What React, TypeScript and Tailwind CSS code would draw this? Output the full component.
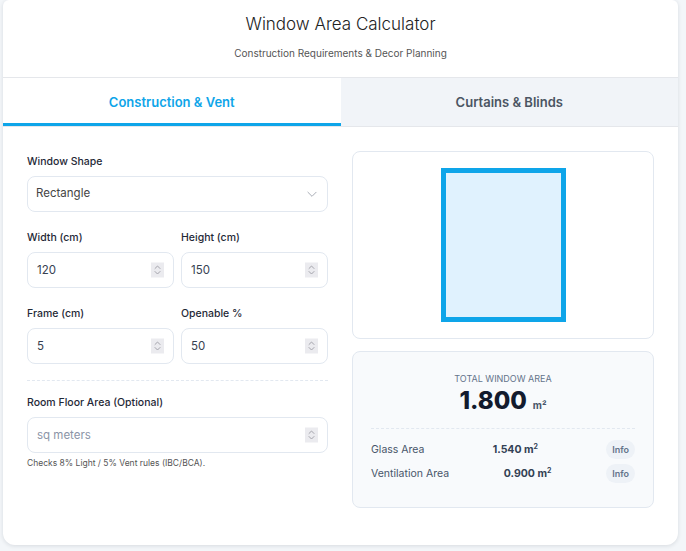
import React from "react";

const font = { fontFamily: "Inter, 'Noto Sans', sans-serif" };

function Spinner() {
  return (
    <div className="absolute right-[10px] top-1/2 -translate-y-1/2 w-[13px] h-[15px] bg-[#ebebef] flex items-center justify-center pointer-events-none">
      <svg width="7" height="11" viewBox="0 0 7 11" fill="none" stroke="#a3a3ab" strokeWidth="1" strokeLinecap="round" strokeLinejoin="round">
        <path d="M1 4 L3.5 1.5 L6 4" />
        <path d="M1 7 L3.5 9.5 L6 7" />
      </svg>
    </div>
  );
}

function NumInput({ value, placeholder }: { value?: string; placeholder?: string }) {
  return (
    <div className="relative">
      <input
        type="text"
        defaultValue={value}
        placeholder={placeholder}
        className="w-full h-[36px] rounded-lg border border-[#e2e8f0] bg-white pl-[9px] pr-[30px] text-[11.5px] text-[#374151] placeholder:text-[#8b95a7] outline-none"
        style={font}
      />
      <Spinner />
    </div>
  );
}

function Label({ children }: { children: React.ReactNode }) {
  return <div className="text-[10.5px] font-medium text-[#1f2937] mb-[7px] leading-[14px]">{children}</div>;
}

export default function App() {
  return (
    <div className="min-h-[551px] bg-[#f3f6f9] pl-[3px] pr-[8px] pb-[7px]" style={font}>
      <div className="bg-white rounded-b-xl rounded-t-md shadow-[0_1px_4px_rgba(15,23,42,0.12)] overflow-hidden">
        <div className="text-center pt-[13px] pb-[17px] border-b border-[#e5e7eb]">
          <h1 className="text-[17px] font-light text-[#222] leading-[22px]">Window Area Calculator</h1>
          <p className="text-[10px] text-[#555] mt-[11px] leading-[14px]">Construction Requirements &amp; Decor Planning</p>
        </div>
        <div className="flex h-[49px] border-b border-[#e5e7eb]">
          <div className="flex-1 flex items-center justify-center pt-[1px] text-[13px] font-semibold text-[#0ea5e9] shadow-[inset_0_-3px_0_#0ea5e9] bg-white">
            Construction &amp; Vent
          </div>
          <div className="flex-1 flex items-center justify-center pt-[1px] text-[13px] font-semibold text-[#4b5563] bg-[#f1f4f8]">
            Curtains &amp; Blinds
          </div>
        </div>
        <div className="flex gap-[24px] px-[24px] pt-[24px] pb-[37px]">
          <div className="w-[301px] pt-[4px]">
            <Label>Window Shape</Label>
            <div className="relative h-[36px] rounded-lg border border-[#e2e8f0] flex items-center pl-[8px] pr-[8px] justify-between">
              <span className="text-[11.5px] text-[#444]">Rectangle</span>
              <svg width="14" height="14" viewBox="0 0 24 24" fill="none" stroke="#a1a7b0" strokeWidth="1.6" strokeLinecap="round" strokeLinejoin="round">
                <path d="m5 9 7 7 7-7" />
              </svg>
            </div>
            <div className="grid grid-cols-2 gap-x-[7px] mt-[19px]">
              <div>
                <Label>Width (cm)</Label>
                <NumInput value="120" />
              </div>
              <div>
                <Label>Height (cm)</Label>
                <NumInput value="150" />
              </div>
            </div>
            <div className="grid grid-cols-2 gap-x-[7px] mt-[19px]">
              <div>
                <Label>Frame (cm)</Label>
                <NumInput value="5" />
              </div>
              <div>
                <Label>Openable %</Label>
                <NumInput value="50" />
              </div>
            </div>
            <div className="border-t border-dashed border-[#e2e8f0] mt-[16px] mb-[15px]" />
            <Label>Room Floor Area (Optional)</Label>
            <NumInput placeholder="sq meters" />
            <p className="text-[8.5px] text-[#555] mt-[4px]">Checks 8% Light / 5% Vent rules (IBC/BCA).</p>
          </div>
          <div className="flex-1 flex flex-col gap-[12px]">
            <div className="h-[188px] rounded-lg border border-[#e2e8f0] flex items-center justify-center">
              <div className="w-[125px] h-[154px] border-[5px] border-[#0ea5e9] bg-[#e0f2fe]" />
            </div>
            <div className="rounded-lg border border-[#e2e8f0] bg-[#f8fafc] px-[18px] pt-[21px] pb-[24px]">
              <div className="text-center text-[9px] uppercase text-[#64748b] leading-[12px]">Total Window Area</div>
              <div className="text-center mt-[2px] leading-[28px]">
                <span className="text-[24px] font-extrabold text-[#131b2e]">1.800</span>
                <span className="text-[10px] font-bold text-[#475569] ml-[6px]">m²</span>
              </div>
              <div className="border-t border-dashed border-[#e2e8f0] mt-[9px] mb-[11px]" />
              <div className="flex items-center justify-between h-[19px] text-[10.5px]">
                <span className="text-[#475569]">Glass Area</span>
                <span className="font-bold text-[#334155]">1.540 m<sup className="text-[7px]">2</sup></span>
                <span className="text-[9px] font-semibold text-[#64748b] bg-[#eef2f7] rounded-full px-[6px] py-[3px]">Info</span>
              </div>
              <div className="flex items-center justify-between h-[19px] text-[10.5px] mt-[5px]">
                <span className="text-[#475569]">Ventilation Area</span>
                <span className="font-bold text-[#334155]">0.900 m<sup className="text-[7px]">2</sup></span>
                <span className="text-[9px] font-semibold text-[#64748b] bg-[#eef2f7] rounded-full px-[6px] py-[3px]">Info</span>
              </div>
            </div>
          </div>
        </div>
      </div>
    </div>
  );
}
